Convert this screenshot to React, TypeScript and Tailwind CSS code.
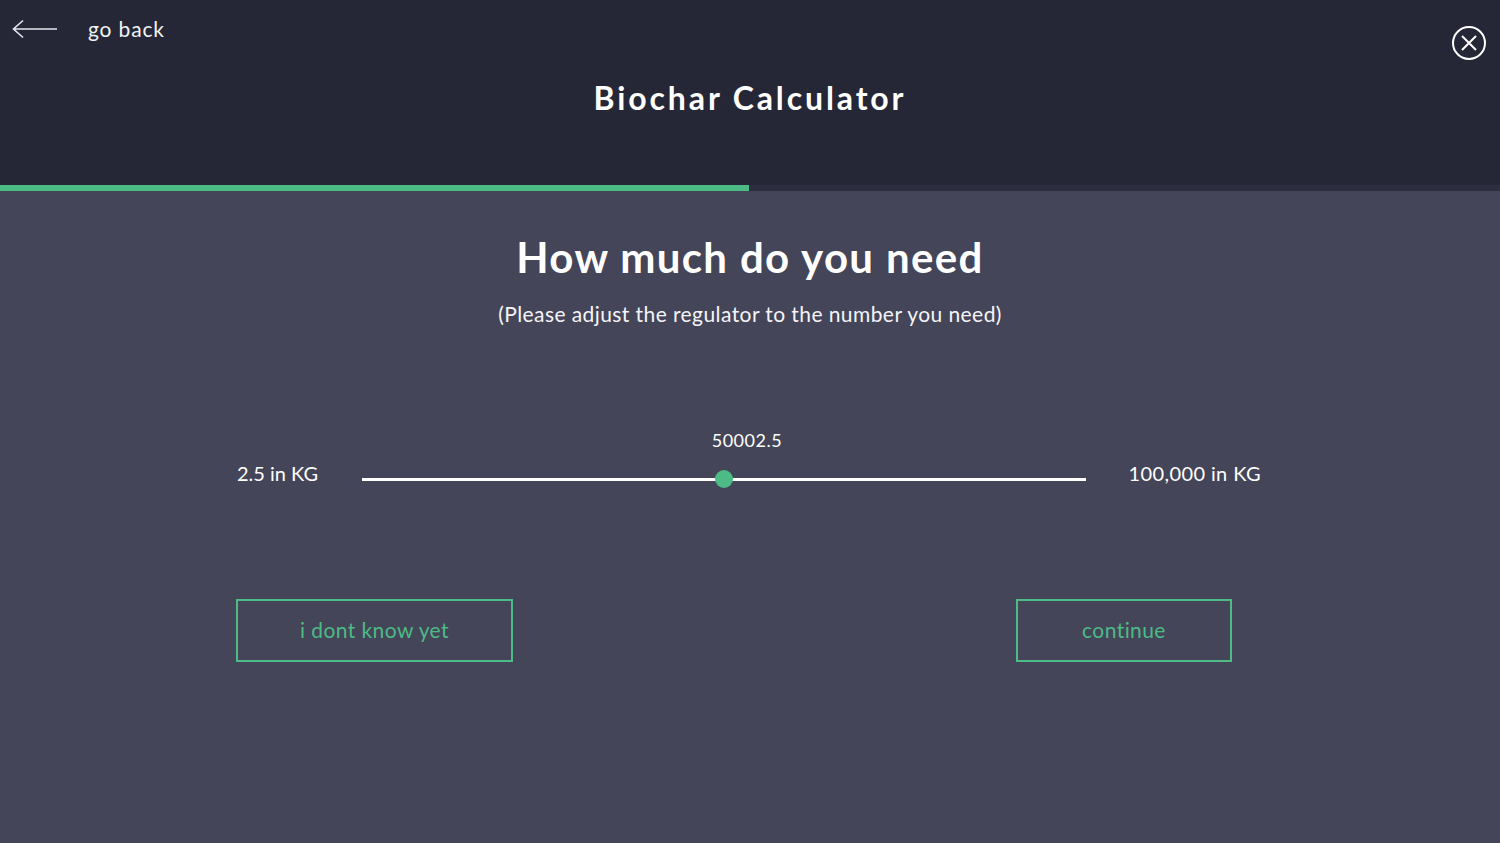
import { useState } from "react";

const font = { fontFamily: "Lato, 'Open Sans', sans-serif" };

const BackArrow = () => (
  <svg width="46" height="20" viewBox="0 0 46 20" fill="none" stroke="#e5e6ee" strokeWidth="1.6">
    <path d="M45 10H2M11 1.5L1.5 10l9.5 8.5" />
  </svg>
);

const CloseIcon = () => (
  <svg width="36" height="36" viewBox="0 0 36 36" fill="none" stroke="#ffffff" strokeWidth="2">
    <circle cx="18" cy="18" r="16" />
    <path d="M11 11l14 14M25 11L11 25" />
  </svg>
);

export default function App() {
  const [value] = useState(50002.5);
  const pct = 50;

  return (
    <div className="min-h-[843px] w-full bg-[#444558] text-white" style={font}>
      <header className="relative h-[185px] bg-[#262736]">
        <div className="flex items-center pl-[12px] pt-[19px]">
          <BackArrow />
          <span className="ml-[30px] text-[21px] leading-[20px] tracking-[0.04em] text-[#f2f2f6]">go back</span>
        </div>
        <button className="absolute right-[13px] top-[25px]">
          <CloseIcon />
        </button>
        <h1 className="mt-[39px] text-center text-[32px] font-bold leading-[40px] tracking-[0.09em]">
          Biochar Calculator
        </h1>
      </header>

      <div className="h-[6px] bg-[#2c2d3e]">
        <div className="h-full w-[749px] bg-[#4cbb85]" />
      </div>

      <main className="pt-[41px]">
        <h2 className="text-center text-[42px] font-bold leading-[50px] tracking-[0.032em]">How much do you need</h2>
        <p className="mt-[18px] text-center text-[21px] leading-[28px] tracking-[0.02em] text-[#f4f4f8]">
          (Please adjust the regulator to the number you need)
        </p>

        <div className="mx-auto mt-[133px] flex w-[1024px] -translate-x-px items-center">
          <span className="w-[125px] text-[20px] leading-[24px]">2.5 in KG</span>
          <div className="relative mt-[12px] h-[3px] w-[724px] bg-white">
            <span
              className="absolute -top-[50px] -translate-x-1/2 pl-[46px] text-[18px] leading-[24px] tracking-[0.03em]"
              style={{ left: `${pct}%` }}
            >
              {value}
            </span>
            <span
              className="absolute top-1/2 h-[18px] w-[18px] -translate-x-1/2 -translate-y-1/2 rounded-full bg-[#4cbb85]"
              style={{ left: `${pct}%` }}
            />
          </div>
          <span className="ml-auto text-[20px] leading-[24px] tracking-[0.02em]">100,000 in KG</span>
        </div>

        <div className="mx-auto mt-[114px] flex w-[1024px] items-center">
          <button className="ml-[-2px] h-[63px] w-[277px] border-2 border-[#4cbb85] pb-[2px] text-[21px] tracking-[0.02em] text-[#4cbb85]">
            i dont know yet
          </button>
          <button className="ml-auto mr-[30px] h-[63px] w-[216px] border-2 border-[#4cbb85] pb-[2px] text-[21px] tracking-[0.02em] text-[#4cbb85]">
            continue
          </button>
        </div>
      </main>
    </div>
  );
}
